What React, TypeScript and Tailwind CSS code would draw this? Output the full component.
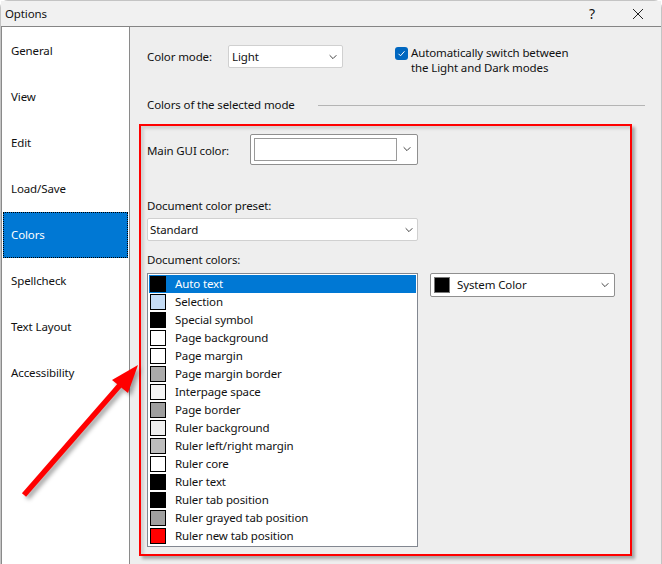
import React from "react";

const nav = ["General", "View", "Edit", "Load/Save", "Colors", "Spellcheck", "Text Layout", "Accessibility"];
const rows: [string, string][] = [
  ["Auto text", "#000000"],
  ["Selection", "#c5dcf5"],
  ["Special symbol", "#000000"],
  ["Page background", "#ffffff"],
  ["Page margin", "#ffffff"],
  ["Page margin border", "#ababab"],
  ["Interpage space", "#f5f5f5"],
  ["Page border", "#9e9e9e"],
  ["Ruler background", "#efefef"],
  ["Ruler left/right margin", "#bdbdbd"],
  ["Ruler core", "#ffffff"],
  ["Ruler text", "#000000"],
  ["Ruler tab position", "#000000"],
  ["Ruler grayed tab position", "#a0a0a0"],
  ["Ruler new tab position", "#ff0000"],
];

function Chevron() {
  return (
    <svg width="10" height="6" viewBox="0 0 10 6" className="shrink-0" fill="none">
      <path d="M1 1l4 4 4-4" stroke="#333" strokeWidth="1.1" transform="translate(0.8 0.4) scale(0.84)" />
    </svg>
  );
}

export default function App() {
  return (
    <div className="relative w-[662px] h-[564px] overflow-hidden bg-white font-['Noto_Sans','Open_Sans',sans-serif] text-[11.5px] tracking-[-0.12px] leading-[16px] text-[#111]">
      <div className="flex flex-col h-full bg-[#eeeeee] rounded-t-lg border border-b-0 border-[#c4c4c4]">
        <div className="flex items-center justify-between h-[26px] shrink-0 bg-[#f1f1f1] border-b border-[#858585] pl-[4px]">
          <span>Options</span>
          <div className="flex items-center">
            <span className="w-[14px] text-center text-[14px] mr-[33px]">?</span>
            <svg width="12" height="12" viewBox="0 0 12 12" className="mr-[17px]" fill="none">
              <path d="M1 1l10 10M11 1L1 11" stroke="#222" strokeWidth="1" />
            </svg>
          </div>
        </div>
        <div className="flex flex-1 min-h-0">
          <div className="w-[129px] shrink-0 bg-white border-r border-l border-[#8a8a8a] pl-[1px] pr-0">
            <div className="pt-[1px]">
              {nav.map((n) =>
                n === "Colors" ? (
                  <div key={n} className="h-[46px] flex items-center pl-[8px] mr-[1px] bg-[#0078d4] text-white outline-1 outline-dotted outline-black -outline-offset-1">
                    {n}
                  </div>
                ) : (
                  <div key={n} className="h-[46px] flex items-center pl-[8px]">
                    {n}
                  </div>
                )
              )}
            </div>
          </div>

          <div className="flex-1 min-w-0 pl-[17px] pt-[18px]">
            <div className="flex h-[23px]">
              <div className="w-[81px] flex items-center">Color mode:</div>
              <div className="w-[115px] h-[23px] flex items-center justify-between bg-white border border-[#d0d0d0] rounded-[2px] pl-[3px] pr-[4px]">
                <span>Light</span>
                <Chevron />
              </div>
              <div className="ml-[52px] flex items-start">
                <span className="w-[13px] h-[13px] mt-[2px] rounded-[3px] bg-[#0067c0] flex items-center justify-center shrink-0">
                  <svg width="9" height="9" viewBox="0 0 9 9" fill="none">
                    <path d="M1.5 4.8l2 2 4-4.5" stroke="#fff" strokeWidth="1" />
                  </svg>
                </span>
                <span className="ml-[3px] leading-[15px] whitespace-nowrap">
                  Automatically switch between
                  <br />
                  the Light and Dark modes
                </span>
              </div>
            </div>

            <div className="flex items-center mt-[28px] h-[18px]">
              <span className="w-[171px] whitespace-nowrap">Colors of the selected mode</span>
              <span className="w-[327px] h-px bg-[#b4b4b4]" />
            </div>

            <div className="flex items-center mt-[20px]">
              <div className="w-[103px] pt-[2px]">Main GUI color:</div>
              <div className="w-[168px] h-[31px] flex items-center bg-white border border-[#8f8f8f] rounded-[2px] pl-[3px]">
                <span className="w-[143px] h-[23px] border border-[#9a9a9a] bg-white" />
                <span className="flex-1 flex justify-center pb-[2px]">
                  <Chevron />
                </span>
              </div>
            </div>

            <div className="mt-[33px] h-[16px]">Document color preset:</div>
            <div className="mt-[4px] w-[271px] h-[23px] flex items-center justify-between bg-white border border-[#d0d0d0] rounded-[2px] pl-[2px] pr-[3px]">
              <span>Standard</span>
              <Chevron />
            </div>

            <div className="mt-[11px] h-[16px]">Document colors:</div>
            <div className="flex items-start mt-[5px]">
              <div className="w-[271px] h-[274px] bg-white border border-[#828790] p-[1px]">
                {rows.map(([label, color], i) => (
                  <div
                    key={label}
                    className={
                      i === 0
                        ? "h-[18px] flex items-center bg-[#0078d4] text-white"
                        : "h-[18px] flex items-center"
                    }
                  >
                    <span
                      className="ml-[1px] w-[16px] h-[16px] border border-black shrink-0"
                      style={{ backgroundColor: color }}
                    />
                    <span className="ml-[9px] whitespace-nowrap">{label}</span>
                  </div>
                ))}
              </div>
              <div className="ml-[12px] w-[185px] h-[24px] flex items-center bg-white border border-[#8f8f8f] rounded-[2px] pl-[3px] pr-[4px]">
                <span className="w-[16px] h-[16px] bg-black border border-[#777] shrink-0" />
                <span className="ml-[7px] flex-1">System Color</span>
                <Chevron />
              </div>
            </div>
          </div>
        </div>
      </div>

      {/* annotation: red frame */}
      <div className="absolute left-[139px] top-[124px] w-[493px] h-[432px] border-2 border-[#ff0000] shadow-[3px_3px_3px_rgba(0,0,0,0.3),inset_3px_3px_3px_rgba(0,0,0,0.12)] pointer-events-none" />
      {/* annotation: red arrow */}
      <svg
        width="662"
        height="564"
        viewBox="0 0 662 564"
        className="absolute left-0 top-0 pointer-events-none drop-shadow-[3px_3px_2px_rgba(0,0,0,0.35)]"
      >
        <path d="M24 495L120 385" stroke="#ff0000" strokeWidth="5.5" fill="none" />
        <path d="M138 365L112 380L128 393Z" fill="#ff0000" />
      </svg>
    </div>
  );
}
